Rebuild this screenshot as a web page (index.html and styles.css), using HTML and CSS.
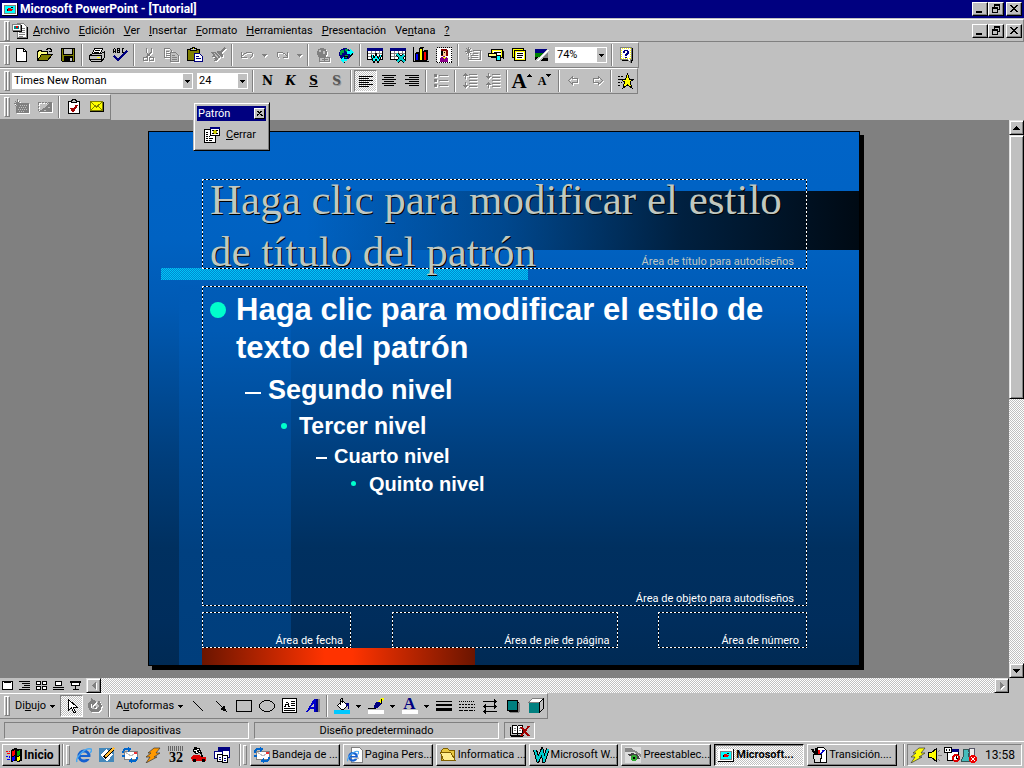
FILE: index.html
```html
<!DOCTYPE html>
<html lang="es">
<head>
    <meta charset="UTF-8">
    <meta name="viewport" content="width=device-width, initial-scale=1.0">
    <title>Microsoft PowerPoint - [Tutorial]</title>
    <link rel="stylesheet" href="styles.css">
</head>
<body>
    <!-- shared drawings -->
    <svg class="defs" aria-hidden="true">
        <symbol id="i-min" viewBox="0 0 12 10"><path fill="#000" d="M2 7h6v2H2z"/></symbol>
        <symbol id="i-restore" viewBox="0 0 12 10"><path fill="#000" d="M4 0h6v2H4zM4 2h1v1H4zM9 2h1v4H9zM8 5h1v1H8zM2 3h6v2H2zM2 5h1v4H2zM7 5h1v4H7zM2 8h6v1H2z"/></symbol>
        <symbol id="i-close" viewBox="0 0 12 10"><path fill="#000" d="M2 1h2v1H2zM8 1h2v1H8zM3 2h2v1H3zM7 2h2v1H7zM4 3h4v1H4zM5 4h2v1H5zM4 5h4v1H4zM3 6h2v1H3zM7 6h2v1H7zM2 7h2v1H2zM8 7h2v1H8z"/></symbol>
        <symbol id="i-down" viewBox="0 0 5 3"><path fill="#000" d="M0 0h5v1H0zM1 1h3v1H1zM2 2h1v1H2z"/></symbol>
        <symbol id="i-ppt" viewBox="0 0 16 16"><path fill="#000" d="M0 2h16v13H0z"/><path fill="#fff" d="M0 2h15v12H0z"/><path fill="#808080" d="M2 4h12v9H2z"/><path fill="#0ff" d="M3 5h10v7H3z"/><path fill="#e00" d="M6 7h3v1h2v1h-1v1H6z"/><path fill="#000" d="M9 6h2v1H9zM5 8h1v2H5z"/></symbol>
        <symbol id="i-mail" viewBox="0 0 16 16"><path fill="#fff" stroke="#808080" d="M2.500 4.500h13v8h-13z"/><path fill="none" stroke="#c0c0c0" d="M3 5l6 4 6-4"/><path fill="#e33" d="M12 5h3v2h-3z"/><path fill="none" stroke="#06c" stroke-width="2" d="M1 6c0-4 3-5 6-4M15 10c0 4-3 5-6 4"/><path fill="#06c" d="M6 0l4 2-4 3zM10 11l-4 3 4 2zM0 8h3v2H0z"/></symbol>
        <symbol id="i-ie" viewBox="0 0 16 16"><g shape-rendering="auto"><circle cx="8" cy="9" r="5" fill="none" stroke="#1560d0" stroke-width="3"/><path fill="#1560d0" d="M4 8h9v2H4z"/><path fill="#c0c0c0" d="M10 10h6v2h-6z"/><path fill="none" stroke="#4aa8f0" stroke-width="1.500" d="M1 15c-2-4 8-15 14-13 1 1 0 3-1 4"/></g></symbol>
        <symbol id="i-bolt" viewBox="0 0 16 16"><path stroke="#333" stroke-width=".7" shape-rendering="auto" d="M9 1h6l-4 5h4l-6 4h3L1 16l4-6H1l5-4H3z"/></symbol>
    </svg>

    <header class="title-bar">
        <svg class="icon"><use href="#i-ppt"/></svg>
        <h1>Microsoft PowerPoint - [Tutorial]</h1>
        <div class="window-buttons">
            <button aria-label="Minimizar"><svg><use href="#i-min"/></svg></button>
            <button aria-label="Restaurar"><svg><use href="#i-restore"/></svg></button>
            <button class="close" aria-label="Cerrar"><svg><use href="#i-close"/></svg></button>
        </div>
    </header>

    <nav class="menu-bar">
        <span class="grip"></span>
        <svg class="icon" viewBox="0 0 16 16"><path fill="#fff" stroke="#808080" d="M5.500 .5h6l3 3v11h-9z"/><path fill="none" stroke="#000" d="M5 15.500h10.500V4"/><path stroke="#808080" d="M10 5.500h3M10 7.500h3M7 9.500h6M7 11.500h6M7 13.500h4"/><path fill="#fff" stroke="#808080" d="M.5 1.500h8v6h-8z"/><path fill="#088" d="M2 3h5v3H2z"/><path fill="#e00" d="M4 3h2v2H4z"/><path fill="none" stroke="#000" d="M1 8.500h8.500V2"/></svg>
        <div class="menus">
            <button><u>A</u>rchivo</button>
            <button><u>E</u>dición</button>
            <button><u>V</u>er</button>
            <button><u>I</u>nsertar</button>
            <button><u>F</u>ormato</button>
            <button><u>H</u>erramientas</button>
            <button><u>P</u>resentación</button>
            <button>Ve<u>n</u>tana</button>
            <button><u>?</u></button>
        </div>
        <div class="window-buttons">
            <button aria-label="Minimizar ventana"><svg><use href="#i-min"/></svg></button>
            <button aria-label="Restaurar ventana"><svg><use href="#i-restore"/></svg></button>
            <button class="close" aria-label="Cerrar ventana"><svg><use href="#i-close"/></svg></button>
        </div>
    </nav>

    <div class="toolbars">
        <!-- standard -->
        <div class="toolbar">
            <span class="grip"></span>
            <button class="tool" aria-label="Nuevo"><svg viewBox="0 0 16 16"><path fill="#fff" stroke="#000" d="M2.500 1.500h7l3 3v10h-10z"/><path fill="none" stroke="#000" d="M9.500 1.500v3h3"/></svg></button>
            <button class="tool" aria-label="Abrir"><svg viewBox="0 0 16 16"><path fill="#ffff80" d="M1 4h4l1 1h5v3H5l-3 5H1z"/><path fill="none" stroke="#000" d="M.5 13.500v-9h1v-1h3v1h6v3"/><path fill="#808000" stroke="#000" d="M.5 13.500l4-6h11l-5 6z"/><path fill="none" stroke="#000" d="M9 2.500h1v-1h3v1h1v2M12 4.500h3M14.500 2v3"/></svg></button>
            <button class="tool" aria-label="Guardar"><svg viewBox="0 0 16 16"><path fill="#808000" stroke="#000" d="M1.500 1.500h13v13h-12l-1-1z"/><path fill="#c0c0c0" stroke="#000" d="M3.500 1.500h9v6h-9z"/><path fill="#000" d="M4 9h9v6H4z"/><path fill="#c0c0c0" d="M10 11h2v3h-2z"/></svg></button>
            <span class="sep"></span>
            <button class="tool" aria-label="Imprimir"><svg viewBox="0 0 16 16"><path fill="#fff" stroke="#000" d="M5.500 1.500h8l-2 5h-8z"/><path stroke="#000" d="M6 3.500h5M5 5.500h5"/><path fill="#c0c0c0" stroke="#000" d="M.5 8.500l3-2h9l3-2v6l-3 4h-10l-2-2z"/><path stroke="#000" d="M1 8.500h12M1 12.500h11M12.500 8v6"/><path stroke="#ff0" d="M8 10.500h3"/></svg></button>
            <button class="tool" aria-label="Ortografía"><svg viewBox="0 0 16 16"><path fill="none" stroke="#000" d="M1.500 6V2M2 1.500h1M3.500 2v4M2 4.500h1M5.500 1v4.500h2v-2h-2v-2h2v2M12 1.500h-2v4h2"/><path fill="none" stroke="#000080" stroke-width="2" d="M2 9l4 4 9-9"/></svg></button>
            <span class="sep"></span>
            <button class="tool off" aria-label="Cortar"><svg viewBox="0 0 16 16"><path fill="none" stroke="#808080" d="M5.500 1v4l2 4M10.500 1v4l-5 5M8 8l2 2"/><circle cx="4.500" cy="12" r="2" fill="none" stroke="#808080"/><circle cx="10.500" cy="12" r="2" fill="none" stroke="#808080"/></svg></button>
            <button class="tool off" aria-label="Copiar"><svg viewBox="0 0 16 16"><path fill="none" stroke="#808080" d="M.5 1.500h5l2 2v7h-7zM2 4.500h3M2 6.500h4M2 8.500h4"/><path fill="#c0c0c0" stroke="#808080" d="M6.500 5.500h5l3 3v6h-8zM8 8.500h3M8 10.500h5M8 12.500h5"/></svg></button>
            <button class="tool" aria-label="Pegar"><svg viewBox="0 0 16 16"><path fill="#808000" stroke="#000" d="M.5 2.500h12v11H.5z"/><path fill="#c0c0c0" stroke="#000" d="M3.500 3.500v-2h2v-1h2v1h2v2z"/><path fill="#ff0" d="M6 1h1v1H6z"/><path fill="#fff" stroke="#000080" d="M7.500 6.500h5l3 3v5h-8zM9 9.500h3M9 11.500h5"/></svg></button>
            <button class="tool off" aria-label="Copiar formato"><svg viewBox="0 0 16 16"><path fill="none" stroke="#808080" stroke-width="2" d="M15 1l-5 5"/><path fill="#808080" d="M7 4h2l4 4v2h-2L6 5zM0 5h5l5 5-4 4H3l2-2H3l2-2H2l1-2z"/><path stroke="#c0c0c0" d="M4 6l5 6"/></svg></button>
            <span class="sep"></span>
            <button class="tool off" aria-label="Deshacer"><svg viewBox="0 0 16 16"><path fill="none" stroke="#808080" d="M2.500 5v5h5M3 9l3-3h1l1-1h4l1 1v3l-2 2"/></svg></button>
            <button class="drop off" aria-label="Lista deshacer"><svg viewBox="0 0 5 3"><path fill="#808080" d="M0 0h5v1H0zM1 1h3v1H1zM2 2h1v1H2z"/></svg></button>
            <button class="tool off" aria-label="Rehacer"><svg viewBox="0 0 16 16"><path fill="none" stroke="#808080" d="M13.500 5v5h-5M13 9l-3-3H9L8 5H4L3 6v3l2 2"/></svg></button>
            <button class="drop off" aria-label="Lista rehacer"><svg viewBox="0 0 5 3"><path fill="#808080" d="M0 0h5v1H0zM1 1h3v1H1zM2 2h1v1H2z"/></svg></button>
            <span class="sep"></span>
            <button class="tool off" aria-label="Hipervínculo"><svg viewBox="0 0 16 16"><circle cx="7" cy="6" r="5" fill="#808080"/><path fill="#c0c0c0" d="M4 3h2v2H4zM8 4h2v3H8z"/><path fill="#c0c0c0" stroke="#808080" d="M4.500 10.500h5v4h-5zM9.500 10.500h5v4h-5zM7 12.500h6"/></svg></button>
            <button class="tool" aria-label="Barra Web"><svg viewBox="0 0 16 16"><circle cx="7" cy="7" r="6" fill="#000080"/><path fill="#00a040" d="M3 3h3v3H4v2H2V5zM7 2h3v3H8zM7 8h3v3H7z"/><path fill="#0ff" d="M9 4h3V2l4 4-4 3V7H9zM9 12H6v-2l-4 3 4 3v-2h3z"/><path fill="none" stroke="#000" d="M12 9.500l3-3M6 9.500h3v1M6 15.500h1"/></svg></button>
            <span class="sep"></span>
            <button class="tool" aria-label="Tabla de Word"><svg viewBox="0 0 16 16"><path fill="#fff" stroke="#000" d="M.5 1.500h15v11H.5z"/><path fill="#000080" d="M0 1h16v3H0z"/><path stroke="#808080" d="M1 6.500h14M1 9.500h14M4.500 4v8M8.500 4v8M12.500 4v8"/><path fill="none" stroke="#000" stroke-width="3" d="M5 8l2 6 2-5 2 5 3-6"/><path fill="none" stroke="#0ff" d="M5 8l2 6 2-5 2 5 3-6"/></svg></button>
            <button class="tool" aria-label="Hoja de Excel"><svg viewBox="0 0 16 16"><path fill="#fff" stroke="#000" d="M.5 1.500h15v11H.5z"/><path fill="#000080" d="M0 1h16v3H0z"/><path stroke="#808080" d="M1 6.500h14M1 9.500h14M4.500 4v8M8.500 4v8M12.500 4v8"/><path stroke="#000" stroke-width="3" d="M7 7l8 8M14 8l-7 7"/><path stroke="#0cc" stroke-width="2" d="M7 7l8 8M14 8l-7 7"/></svg></button>
            <button class="tool" aria-label="Gráfico"><svg viewBox="0 0 16 16"><path fill="none" stroke="#000" d="M.5 0v14.500h15"/><path fill="#00f" stroke="#000" d="M2.500 6.500h3v7h-3z"/><path fill="#ff0" stroke="#000" d="M6.500 1.500h3v12h-3z"/><path fill="#f00" stroke="#000" d="M10.500 4.500h3v9h-3z"/><path fill="#000" d="M3 5h4v1H3zM7 0h4v1H7zM11 3h4v1h-4zM14 4h1v9h-1z"/></svg></button>
            <button class="tool" aria-label="Imágenes"><svg viewBox="0 0 16 16"><path fill="#fff" stroke="#000" stroke-dasharray="1 1" d="M.5 .5h15v15H.5z"/><path fill="#800000" d="M5 2h5l2 2v5H5z"/><path fill="#fc9" d="M7 4h3v5H7z"/><path fill="#000" d="M5 4h2v4H5zM8 5h1v1H8z"/><path fill="#808" d="M4 11l4-2 4 2v4H4z"/><path fill="#ff0" d="M7 10h3l-1 3z"/></svg></button>
            <span class="sep"></span>
            <button class="tool off" aria-label="Nueva diapositiva"><svg viewBox="0 0 16 16"><path fill="none" stroke="#808080" d="M3.500 0v9M0 4.500h7M1 1l5 6M6 1L1 7M8 3.500h7.500v9h-12v-3M8 6.500h5M6 8.500h7M6 10.500h7"/></svg></button>
            <button class="tool" aria-label="Diseño"><svg viewBox="0 0 16 16"><path fill="#fff" stroke="#000" d="M3.500 2.500h11v8h-11z"/><path fill="none" stroke="#ff0" d="M4.500 3.500h9v6h-9z"/><path stroke="#000" d="M6 5.500h7"/><path fill="#ffff80" stroke="#000" d="M.5 6.500h8v3h-8z"/><path fill="#0ff" stroke="#000" d="M8.500 8.500h4v5h-4z"/><path fill="#000" d="M15 4h1v8h-1z"/></svg></button>
            <button class="tool" aria-label="Aplicar diseño"><svg viewBox="0 0 16 16"><path fill="#ff0" stroke="#000" d="M1.500 1.500h11v9h-11z"/><path fill="#ff0" stroke="#000" d="M3.500 3.500h11v10h-11z"/><path fill="#fff" d="M5 5h8v7H5z"/><path stroke="#000" d="M6 6.500h6M6 8.500h6M6 10.500h5"/></svg></button>
            <button class="tool" aria-label="Blanco y negro"><svg viewBox="0 0 16 16"><path fill="#000080" d="M1 2h12l-4 4H1z"/><path fill="#008000" d="M1 6h8l-4 4H1z"/><path fill="#000" d="M1 10h3l-3 3zM9 11h5v3H6z"/><path fill="#fff" d="M13 3h2L5 14H3z"/><path fill="#808080" d="M14 5v6H9z"/></svg></button>
            <label class="combo zoom" aria-label="Zoom"><select><option>74%</option></select><span><svg><use href="#i-down"/></svg></span></label>
            <span class="sep"></span>
            <button class="tool" aria-label="Ayuda"><svg viewBox="0 0 16 16"><path fill="#000" d="M3 1h11v13h-1v2h-2v-2H3z"/><path fill="#fff" stroke="#808080" d="M1.500 .5h11v12h-1v3l-3-3h-7z"/><path fill="none" stroke="#ff0" stroke-dasharray="1 1" d="M2.500 1.500h9v10h-9z"/><path fill="#000080" d="M5 3h4v1h1v3H9v1H8v1H6V7h1V6h1V4H6v2H4V4h1zM6 10h2v1H6z"/></svg></button>
        </div>

        <!-- formatting -->
        <div class="toolbar">
            <span class="grip"></span>
            <label class="combo font" aria-label="Fuente"><select><option>Times New Roman</option></select><span><svg><use href="#i-down"/></svg></span></label>
            <label class="combo size" aria-label="Tamaño"><select><option>24</option></select><span><svg><use href="#i-down"/></svg></span></label>
            <span class="sep"></span>
            <button class="tool letter">N</button>
            <button class="tool letter italic">K</button>
            <button class="tool letter"><u>S</u></button>
            <button class="tool letter shaded">S</button>
            <span class="sep"></span>
            <button class="tool pressed" aria-label="Izquierda"><svg viewBox="0 0 16 16"><path stroke="#000" d="M1 3.500h14M1 5.500h10M1 7.500h14M1 9.500h10M1 11.500h14M1 13.500h10"/></svg></button>
            <button class="tool" aria-label="Centrar"><svg viewBox="0 0 16 16"><path stroke="#000" d="M1 2.500h14M3 4.500h10M1 6.500h14M3 8.500h10M1 10.500h14M3 12.500h10"/></svg></button>
            <button class="tool" aria-label="Derecha"><svg viewBox="0 0 16 16"><path stroke="#000" d="M1 2.500h14M5 4.500h10M1 6.500h14M5 8.500h10M1 10.500h14M5 12.500h10"/></svg></button>
            <span class="sep"></span>
            <button class="tool off" aria-label="Viñetas"><svg viewBox="0 0 16 16"><path fill="#808080" d="M1 1h3v3H1zM1 6h3v3H1zM1 11h3v3H1zM6 2h9v1H6zM6 7h9v1H6zM6 12h9v1H6z"/></svg></button>
            <span class="sep"></span>
            <button class="tool off" aria-label="Aumentar espacio"><svg viewBox="0 0 16 16"><path fill="#808080" d="M3 0h1v1h1v1h1v1H4v3H3V3H1V2h1V1h1zM3 9h1v3h2v1H5v1H4v1H3v-1H2v-1H1v-1h2zM7 1h8v1H7zM7 4h8v1H7zM7 7h8v1H7zM7 10h8v1H7zM7 13h8v1H7z"/></svg></button>
            <button class="tool off" aria-label="Disminuir espacio"><svg viewBox="0 0 16 16"><path fill="#808080" d="M3 0h1v3h2v1H5v1H4v1H3V5H2V4H1V3h2zM3 9h1v1h1v1h1v1H4v3H3v-3H1v-1h1v-1h1zM7 1h8v1H7zM7 4h8v1H7zM7 7h8v1H7zM7 10h8v1H7zM7 13h8v1H7z"/></svg></button>
            <span class="sep"></span>
            <button class="tool letter grow">A<svg viewBox="0 0 5 3"><path fill="#000" d="M2 0h1v1H2zM1 1h3v1H1zM0 2h5v1H0z"/></svg></button>
            <button class="tool letter shrink">A<svg viewBox="0 0 5 3"><use href="#i-down"/></svg></button>
            <span class="sep"></span>
            <button class="tool off" aria-label="Promover"><svg viewBox="0 0 16 16"><path fill="none" stroke="#808080" d="M2.500 7.500l4-4v2h5v4h-5v2z"/></svg></button>
            <button class="tool off" aria-label="Degradar"><svg viewBox="0 0 16 16"><path fill="none" stroke="#808080" d="M13.500 7.500l-4-4v2h-5v4h5v2z"/></svg></button>
            <span class="sep"></span>
            <button class="tool" aria-label="Efectos de animación"><svg viewBox="0 0 16 16"><path stroke="#000" d="M0 3.500h5M0 6.500h3M0 9.500h4M0 12.500h3" stroke-dasharray="2 1"/><path fill="#ff0" stroke="#000" d="M9.500 1l2 5h4.500l-4 3 2 6-4.500-3-4.500 3 1.500-6-4-3h5z"/></svg></button>
        </div>

        <!-- reviewing -->
        <div class="toolbar reviewing">
            <span class="grip"></span>
            <button class="tool off" aria-label="Insertar comentario"><svg viewBox="0 0 16 16"><path fill="#808080" d="M3 4h12v10H2V7h1z"/><path fill="none" stroke="#808080" d="M3.500 0v8M0 4.500h7M1 2l5 5M6 2L1 7"/><path fill="none" stroke="#c0c0c0" stroke-dasharray="1 1" d="M6 6.500h7M5 8.500h8M4 10.500h9M5 12.500h6"/></svg></button>
            <button class="tool off" aria-label="Mostrar comentarios"><svg viewBox="0 0 16 16"><path fill="none" stroke="#808080" stroke-dasharray="2 1" d="M1.500 3.500h13v9h-13z"/><path fill="#808080" d="M3 11l9-8h3v8l-1 2H3z"/><path stroke="#c0c0c0" d="M4 11l8-7M7 11.500h2M11 8.500h2"/></svg></button>
            <span class="sep"></span>
            <button class="tool" aria-label="Crear tarea"><svg viewBox="0 0 16 16"><path fill="#fff" stroke="#000" d="M2.500 2.500h11v12h-11z"/><path fill="#c0c0c0" stroke="#000" d="M5.500 3.500v-2h1v-1h3v1h1v2z"/><path fill="none" stroke="#a00000" stroke-width="2" d="M5 9l2 3 4-6"/></svg></button>
            <button class="tool" aria-label="Enviar"><svg viewBox="0 0 16 16"><path fill="#ff0" stroke="#808000" d="M1.500 2.500h12v9h-12z"/><path fill="none" stroke="#808000" d="M2 3l5.500 5L13 3M2 11l4-4M13 11L9 7"/><path fill="none" stroke="#000" d="M1 12.500h13.500V3"/></svg></button>
        </div>
    </div>

    <div class="palette">
        <div class="palette-title"><h2>Patrón</h2><button aria-label="Cerrar barra"><svg><use href="#i-close"/></svg></button></div>
        <button class="palette-close"><svg class="icon" viewBox="0 0 16 16"><path fill="#fff" stroke="#000" d="M.5 2.500h11v13H.5z"/><path stroke="#000" d="M2 5.500h2M2 7.500h2M2 9.500h2M5 9.500h1M2 11.500h2M5 11.500h4M2 13.500h2M5 13.500h3"/><path fill="#fff" stroke="#000" d="M6.500 1.500h9v7h-9z"/><path fill="#000080" d="M6 0h10v2H6z"/><path stroke="#000" d="M8 3.500h2M12 3.500h2M8 6.500h2M12 6.500h2"/><path fill="#cc0" d="M10 3h2v1h1v2h-1v1h-2V6H9V4h1z"/></svg><span><u>C</u>errar</span></button>
    </div>

    <main class="work-area">
        <div class="desk">
            <article class="slide">
                <section class="frame slide-title">
                    <h2>Haga clic para modificar el estilo<br>de título del patrón</h2>
                    <span class="area">Área de título para autodiseños</span>
                </section>
                <section class="frame slide-body">
                    <ul>
                        <li class="l1">Haga clic para modificar el estilo de texto del patrón</li>
                        <li class="l2">Segundo nivel</li>
                        <li class="l3">Tercer nivel</li>
                        <li class="l4">Cuarto nivel</li>
                        <li class="l5">Quinto nivel</li>
                    </ul>
                    <span class="area">Área de objeto para autodiseños</span>
                </section>
                <footer class="slide-foot">
                    <div class="frame">Área de fecha</div>
                    <div class="frame wide">Área de pie de página</div>
                    <div class="frame">Área de número</div>
                </footer>
            </article>
        </div>
        <div class="vscroll">
            <button aria-label="Subir"><svg viewBox="0 0 7 4"><path fill="#000" d="M3 0h1v1H3zM2 1h3v1H2zM1 2h5v1H1zM0 3h7v1H0z"/></svg></button>
            <div class="track"><div class="thumb"></div></div>
            <button aria-label="Bajar"><svg viewBox="0 0 7 4"><path fill="#000" d="M0 0h7v1H0zM1 1h5v1H1zM2 2h3v1H2zM3 3h1v1H3z"/></svg></button>
        </div>
    </main>

    <div class="hscroll">
        <div class="views">
            <button aria-label="Diapositiva"><svg viewBox="0 0 12 12"><path fill="#fff" stroke="#000" d="M.5 1.500h10v8H.5z"/><path fill="#000" d="M2 1h7v2H2z"/></svg></button>
            <button aria-label="Esquema"><svg viewBox="0 0 12 12"><path stroke="#000" d="M0 1.500h11M3 3.500h8M5 5.500h6M3 7.500h8M0 9.500h11"/></svg></button>
            <button aria-label="Clasificador"><svg viewBox="0 0 12 12"><path fill="#fff" stroke="#000" d="M.5 1.500h4v3h-4zM6.500 1.500h4v3h-4zM.5 6.500h4v3h-4zM6.500 6.500h4v3h-4z"/></svg></button>
            <button aria-label="Notas"><svg viewBox="0 0 12 12"><path fill="#fff" stroke="#000" d="M2.500 1.500h6v4h-6z"/><path stroke="#000" d="M0 7.500h11M0 9.500h11"/></svg></button>
            <button aria-label="Presentación"><svg viewBox="0 0 12 12"><path fill="#fff" stroke="#000" d="M1.500 2.500h8v3h-8z"/><path stroke="#000" stroke-width="2" d="M0 2h11"/><path fill="none" stroke="#000" d="M5.500 6v4M3 9.500h6"/></svg></button>
        </div>
        <button class="arrow" aria-label="Izquierda"><svg viewBox="0 0 4 7"><path fill="#808080" d="M3 0h1v7H3zM2 1h1v5H2zM1 2h1v3H1zM0 3h1v1H0z"/></svg></button>
        <div class="track"></div>
        <button class="arrow" aria-label="Derecha"><svg viewBox="0 0 4 7"><path fill="#808080" d="M0 0h1v7H0zM1 1h1v5H1zM2 2h1v3H2zM3 3h1v1H3z"/></svg></button>
        <span class="corner"></span>
    </div>

    <!-- drawing -->
    <div class="draw-row">
        <div class="toolbar">
            <span class="grip"></span>
            <button class="text-tool dibujo"><span>Di<u>b</u>ujo</span><svg><use href="#i-down"/></svg></button>
            <button class="tool pressed" aria-label="Seleccionar"><svg viewBox="0 0 16 16"><path fill="#fff" stroke="#000" d="M4.500 1.500v11l3-3 2 5h2l-2-5h4z"/></svg></button>
            <button class="tool off" aria-label="Girar"><svg viewBox="0 0 16 16"><path fill="none" stroke="#808080" stroke-width="3" d="M11 4c4 3 2 9-3 9S0 7 5 4"/><path fill="#808080" d="M4 0l6 4-5 4z"/><circle cx="8" cy="9" r="1" fill="#808080"/></svg></button>
            <span class="sep"></span>
            <button class="text-tool autoformas"><span>A<u>u</u>toformas</span><svg><use href="#i-down"/></svg></button>
            <button class="tool" aria-label="Línea"><svg viewBox="0 0 16 16"><path stroke="#000" d="M3 3l10 10"/></svg></button>
            <button class="tool" aria-label="Flecha"><svg viewBox="0 0 16 16"><path stroke="#000" d="M3 3l8 8"/><path fill="#000" d="M14 14l-7-3 4-4z"/></svg></button>
            <button class="tool" aria-label="Rectángulo"><svg viewBox="0 0 16 16"><path fill="none" stroke="#000" d="M.5 2.500h15v11H.5z"/></svg></button>
            <button class="tool" aria-label="Elipse"><svg viewBox="0 0 16 16"><ellipse cx="8" cy="8" rx="7.500" ry="5.500" fill="none" stroke="#000"/></svg></button>
            <button class="tool" aria-label="Cuadro de texto"><svg viewBox="0 0 16 16"><path fill="#fff" stroke="#000" d="M.5 .5h14v14H.5z"/><path fill="none" stroke="#000" d="M2 8.500h2M6 8.500h2M3.500 8V6M4 4.500h2M6.500 5v3M4 6.500h3M9 3.500h4M9 5.500h4M9 7.500h4M2 10.500h11M2 12.500h11"/></svg></button>
            <button class="tool" aria-label="WordArt"><svg viewBox="0 0 16 16"><path fill="#808080" d="M13 1h2v13h-2z"/><path fill="#00c" d="M9 1h4v13H9v-3H5l-2 3H0l3-3z"/><path fill="#000080" d="M11 1h2v13h-2z"/><path fill="#c0c0c0" d="M9 5v4H6z"/></svg></button>
            <span class="sep"></span>
            <button class="tool" aria-label="Relleno"><svg viewBox="0 0 16 16"><path fill="#00c8ff" d="M0 12h16v4H0z"/><path fill="#fff" stroke="#000" d="M3.500 7.500l5-5 5 5-4 4h-2z"/><path fill="none" stroke="#000" d="M6.500 7V2l1-2h1v5"/><path fill="#000080" d="M12 5h3v6h-1V8h-2z"/></svg></button>
            <button class="drop" aria-label="Color de relleno"><svg><use href="#i-down"/></svg></button>
            <button class="tool" aria-label="Línea de color"><svg viewBox="0 0 16 16"><path fill="#fff" d="M0 12h16v4H0z"/><path stroke="#ff0" stroke-width="3" d="M15 0l-4 5"/><path fill="#000080" d="M8 4h4l1 2-3 4H6V8z"/><path fill="#000" d="M13 1h1v5h-1zM0 10h8v1H0z"/></svg></button>
            <button class="drop" aria-label="Color de línea"><svg><use href="#i-down"/></svg></button>
            <button class="tool font-color" aria-label="Color de fuente">A</button>
            <button class="drop" aria-label="Lista de colores"><svg><use href="#i-down"/></svg></button>
            <button class="tool" aria-label="Estilo de línea"><svg viewBox="0 0 16 16"><path fill="#000" d="M0 3h16v1H0zM0 6h16v2H0zM0 10h16v3H0z"/></svg></button>
            <button class="tool" aria-label="Estilo de guión"><svg viewBox="0 0 16 16"><path stroke="#000" stroke-dasharray="1 1" d="M0 3.500h16"/><path stroke="#000" stroke-dasharray="2 1" d="M0 6.500h16M0 9.500h16"/><path stroke="#000" stroke-dasharray="4 1" d="M0 12.500h16"/></svg></button>
            <button class="tool" aria-label="Estilo de flecha"><svg viewBox="0 0 16 16"><path fill="none" stroke="#000" d="M1 3.500h14M12.500 1v5M13.500 2v3M1 8.500h14M3.500 6v5M2.500 7v3M12.500 6v5M13.500 7v3M1 13.500h14M3.500 11v5M2.500 12v3"/></svg></button>
            <button class="tool" aria-label="Sombra"><svg viewBox="0 0 16 16"><path fill="#000" d="M4 4h10v10H4z"/><path fill="#808080" d="M13 5h2v9h-1v1H5v-1h8z"/><path fill="#008080" stroke="#000" d="M2.500 2.500h10v10h-10z"/></svg></button>
            <button class="tool" aria-label="3D"><svg viewBox="0 0 16 16"><path fill="#fff" stroke="#808080" d="M.5 4.500l4-4h11l-4 4z"/><path fill="#c0c0c0" stroke="#000" d="M11.500 4.500l4-4v10l-4 4z"/><path fill="#008080" d="M1 5h10v10H1z"/></svg></button>
        </div>
    </div>

    <div class="status">
        <div class="cell">Patrón de diapositivas</div>
        <div class="cell">Diseño predeterminado</div>
        <div class="cell spell"><svg viewBox="0 0 22 12"><path fill="#fff" stroke="#000" d="M3.500 .5h4l1 1 1-1h4v8h-4l-1 1-1-1h-4z"/><path fill="none" stroke="#000" d="M1.500 2v8.500h13M8.500 1v8M2 11.500h12"/><path stroke="#808080" d="M5 3.500h2M5 5.500h2M10 3.500h2M10 5.500h2"/><path stroke="#a00000" stroke-width="2" d="M12 2l8 9M20 1l-8 10"/></svg></div>
    </div>

    <footer class="taskbar">
        <button class="start"><svg class="icon" viewBox="0 0 16 16"><path fill="#000" d="M5 3l4-2 3 1h4v12l-4 1-3-1-4 1z"/><path fill="#f00" d="M6 4l3-1v5l-3 1z"/><path fill="#0a0" d="M11 4l3-1v5l-3 1z"/><path fill="#00f" d="M6 10l3-1v4l-3 1z"/><path fill="#ff0" d="M11 10l3-1v4l-3 1z"/><path fill="#f00" d="M0 4h2v1H0zM3 4h1v1H3zM1 6h3v1H1z"/><path fill="#00f" d="M0 9h2v1H0zM3 9h1v2H3zM1 12h3v1H1z"/></svg>Inicio</button>
        <span class="sep"></span><span class="grip"></span>
        <div class="quick">
            <button aria-label="Internet Explorer"><svg class="icon"><use href="#i-ie"/></svg></button>
            <button aria-label="Escritorio"><svg class="icon" viewBox="0 0 16 16"><path fill="#48b" d="M0 1h15v14H0z"/><path fill="#fff" d="M1 8l6-6 7 5-6 8z"/><path stroke="#000" stroke-width="3" d="M5 11l9-9"/><path stroke="#fb3" stroke-width="2" d="M6 10l9-9"/></svg></button>
            <button aria-label="Outlook Express"><svg class="icon"><use href="#i-mail"/></svg></button>
            <button aria-label="Winamp"><svg class="icon orange"><use href="#i-bolt"/></svg></button>
            <button class="cal" aria-label="Calendario">32</button>
            <button aria-label="Carreras"><svg class="icon" viewBox="0 0 16 16"><path fill="#fff" stroke="#000" d="M3.500 .5l5 1 1 4-5 1-2-2z"/><path fill="#000" d="M4 1h2v2H4zM6 3h2v2H6zM3 4h2v2H3zM8 2h1l4 9h-2z"/><path fill="#d00" d="M0 10l3-2h5l3 2h4v4H1z"/><path fill="#000" d="M2 12h3v3H2zM11 12h3v3h-3z"/></svg></button>
            <button aria-label="Ventanas"><svg class="icon" viewBox="0 0 16 16"><path fill="#fff" stroke="#000080" d="M4.500 1.500h11v9h-11z"/><path fill="#000080" d="M4 0h12v4H4z"/><path fill="#fff" stroke="#000080" d="M.5 4.500h8v7h-8z"/><path fill="#fff" stroke="#000" d="M3.500 7.500h5v7h-5zM8.500 8.500h5v7h-5z"/><path stroke="#000080" d="M5 10.500h2M5 12.500h2M10 11.500h2M10 13.500h2"/></svg></button>
        </div>
        <span class="sep"></span><span class="grip"></span>
        <div class="tasks">
            <button><svg class="icon"><use href="#i-mail"/></svg><span>Bandeja de ...</span></button>
            <button><svg class="icon" viewBox="0 0 16 16"><path fill="#fff" stroke="#808080" d="M4.500 .5h8l3 3v12h-11z"/><svg y="3" width="12" height="12"><use href="#i-ie"/></svg></svg><span>Pagina Pers...</span></button>
            <button><svg class="icon" viewBox="0 0 16 16"><path fill="#e8c840" stroke="#806000" d="M1.500 3.500l2-2h4l2 2h5v10h-13z"/><path fill="#ffee90" stroke="#806000" d="M.5 5.500h10l5 8h-12z"/></svg><span>Informatica ...</span></button>
            <button><svg class="icon" viewBox="0 0 16 16"><path fill="none" stroke="#000" stroke-width="4" d="M2 3l3 10 4-9 2 9 4-11"/><path fill="none" stroke="#0cc" stroke-width="2" d="M2 3l3 10 4-9 2 9 4-11"/></svg><span>Microsoft W...</span></button>
            <button><svg class="icon" viewBox="0 0 16 16"><path fill="#ddd" d="M0 0h16v16H0z"/><path fill="#888" d="M0 1h6l10 6v3L9 5H0z"/><path fill="#444" d="M2 8l5-2 6 2 2 4h-2l-4-3H5z"/><circle cx="9" cy="11" r="3" fill="#3a3"/><path fill="#000" d="M8 10h2v2H8z"/></svg><span>Preestablec...</span></button>
            <button class="active"><svg class="icon"><use href="#i-ppt"/></svg><span>Microsoft...</span></button>
            <button><svg class="icon" viewBox="0 0 16 16"><path fill="#fff" stroke="#000" d="M6.500 .5h6l3 3v12h-9z"/><path stroke="#e00" stroke-width="2" d="M8 8V3"/><path stroke="#00c" stroke-width="2" d="M9 8l4-5"/><path stroke="#000" stroke-width="2" d="M5 8L1 2M5 8V1"/><path fill="#ddd" stroke="#000" d="M2.500 7.500h8l-1 8h-6z"/></svg><span>Transición....</span></button>
        </div>
        <span class="sep"></span>
        <div class="tray">
            <svg class="icon yellow"><use href="#i-bolt"/></svg>
            <svg class="icon" viewBox="0 0 16 16"><path fill="#ff0" stroke="#000" d="M1.500 5.500h3l5-4v13l-5-4h-3z"/><path stroke="#808080" d="M11 5l2-2M11 8.500h4M11 12l2 2"/></svg>
            <svg class="icon" viewBox="0 0 16 16"><path fill="#fff" stroke="#000" d="M3.500 3.500h11v10h-11z"/><path fill="#000080" d="M3 2h12v3H3z"/><path fill="#fff" stroke="#000" d="M.5 .5h7v5h-7z"/><path stroke="#000" d="M2.500 2v2M5.500 2v2"/><circle cx="12" cy="11" r="3" fill="#fff" stroke="#d00" stroke-width="2"/><path fill="none" stroke="#000" d="M12 9v2.500h2"/></svg>
            <svg class="icon" viewBox="0 0 16 16"><path fill="#eee" stroke="#556" d="M8 4a3 3 0 116 0 3 3 0 01-1 3l2 5H7l2-5z"/><path fill="#4bb" stroke="#355" d="M2 5a3 3 0 116 0 3 3 0 01-1 3l3 6H0l3-6z"/><circle cx="12" cy="12" r="4" fill="#e00"/><path stroke="#fff" d="M10 10l4 4M14 10l-4 4"/></svg>
            <time>13:58</time>
        </div>
    </footer>
</body>
</html>
```
FILE: styles.css
```css
*{
    box-sizing: border-box;
}
body{
    margin: 0;
    height: 100vh;
    display: flex;
    flex-direction: column;
    overflow: hidden;
    background: #c0c0c0;
    color: #000;
    font-family: Roboto, "Liberation Sans", sans-serif;
    font-size: 11px;
    line-height: 14px;
}
h1, h2, ul{
    margin: 0;
    padding: 0;
    font-size: inherit;
    font-weight: inherit;
}
button, select{
    margin: 0;
    padding: 0;
    border: 0;
    background: none;
    color: inherit;
    font: inherit;
    border-radius: 0;
}
svg{
    display: block;
    flex: none;
    shape-rendering: crispEdges;
}
.defs{
    position: absolute;
    width: 0;
    height: 0;
}
.icon{
    width: 16px;
    height: 16px;
}

/* title and menu */
.title-bar{
    display: flex;
    align-items: center;
    height: 18px;
    padding: 0 2px;
    gap: 2px;
    background: #000080;
    color: #fff;
}
.title-bar h1{
    flex: 1;
    font-size: 12px;
    font-weight: 700;
}
.window-buttons{
    display: flex;
}
.window-buttons button{
    width: 16px;
    height: 14px;
    padding: 1px;
    background: #c0c0c0;
    border: 1px solid;
    border-color: #fff #000 #000 #fff;
    box-shadow: inset -1px -1px #808080;
}
.window-buttons svg{
    width: 12px;
    height: 10px;
}
.window-buttons .close{
    margin-left: 2px;
}
.menu-bar{
    display: flex;
    align-items: center;
    height: 23px;
    margin-top: 1px;
    padding: 0 1px 0 4px;
    border-top: 1px solid #fff;
    border-bottom: 1px solid #808080;
    border-right: 1px solid #808080;
}
.menu-bar .icon{
    margin: 0 5px 0 2px;
}
.menus{
    display: flex;
    flex: 1;
    gap: 9px;
}
.grip{
    flex: none;
    width: 6px;
    height: 20px;
    border: 1px solid;
    border-color: #fff #808080 #808080 #fff;
    background: linear-gradient(90deg, #c0c0c0 1px, #808080 1px 2px, #fff 2px 3px, #c0c0c0 3px);
}

/* toolbars */
.toolbars{
    display: flex;
    flex-direction: column;
    align-items: flex-start;
}
.toolbar{
    display: flex;
    align-items: center;
    height: 26px;
    padding: 0 0 0 4px;
    border: 1px solid;
    border-color: #fff #808080 #808080 transparent;
    border-left: 0;
}
.reviewing{
    padding-right: 2px;
}
.tool{
    display: flex;
    align-items: center;
    justify-content: center;
    width: 23px;
    height: 22px;
}
.tool svg{
    width: 16px;
    height: 16px;
}
.drop{
    display: flex;
    align-items: center;
    justify-content: center;
    width: 12px;
    height: 22px;
}
.drop svg, .combo svg, .text-tool svg{
    width: 5px;
    height: 3px;
}
.off svg{
    filter: drop-shadow(1px 1px 0 #fff);
}
.pressed{
    border: 1px solid;
    border-color: #808080 #fff #fff #808080;
}
.pressed, .track, .tasks .active{
    background: repeating-conic-gradient(#fff 0 25%, #c0c0c0 0 50%) 0 0 / 2px 2px;
}
.sep{
    flex: none;
    width: 2px;
    height: 22px;
    margin: 0 2px;
    border-left: 1px solid #808080;
    border-right: 1px solid #fff;
}
.combo{
    position: relative;
    height: 16px;
    margin: 0 2px;
    background: #fff;
}
.combo select{
    display: block;
    appearance: none;
    width: 100%;
    height: 16px;
    padding-left: 2px;
    outline: 0;
}
.combo span{
    position: absolute;
    top: 1px;
    right: 1px;
    display: flex;
    align-items: center;
    justify-content: center;
    width: 9px;
    height: 14px;
    background: #c0c0c0;
    pointer-events: none;
}
.combo.font{
    width: 181px;
}
.combo.size{
    width: 51px;
}
.combo.zoom{
    width: 52px;
}
.letter{
    font-family: "DejaVu Serif", serif;
    font-size: 12px;
    font-weight: 700;
}
.italic{
    font-style: italic;
}
.shaded{
    color: #555;
    text-shadow: 1px 1px #999;
}
.grow, .shrink{
    font-family: "Liberation Serif", serif;
}
.grow{
    font-size: 21px;
}
.shrink{
    font-size: 12px;
}
.grow svg, .shrink svg{
    width: 5px;
    height: 3px;
    margin-bottom: 12px;
}
.text-tool{
    display: flex;
    align-items: center;
    gap: 4px;
    height: 22px;
}
.dibujo{
    width: 50px;
    padding-left: 5px;
}
.autoformas{
    width: 74px;
    padding-left: 4px;
}

/* floating bar */
.palette{
    position: absolute;
    z-index: 2;
    top: 102px;
    left: 193px;
    width: 77px;
    height: 49px;
    padding: 2px;
    background: #c0c0c0;
    border: 1px solid;
    border-color: #c0c0c0 #000 #000 #c0c0c0;
    box-shadow: inset 1px 1px #fff, inset -1px -1px #808080;
}
.palette-title{
    display: flex;
    align-items: center;
    justify-content: space-between;
    margin: 1px;
    height: 15px;
    padding: 0 1px;
    background: #000080;
    color: #fff;
}
.palette-title button{
    width: 11px;
    height: 11px;
    background: #c0c0c0;
    border: 1px solid;
    border-color: #fff #000 #000 #fff;
}
.palette-title svg{
    width: 9px;
    height: 9px;
}
.palette-close{
    display: flex;
    align-items: center;
    gap: 6px;
    padding: 5px 8px;
}

/* slide */
.work-area{
    display: flex;
    flex: 1;
    min-height: 0;
}
.desk{
    display: flex;
    flex: 1;
    align-items: center;
    justify-content: center;
    padding: 0 1px 1px 0;
    background: #808080;
}
.slide{
    position: relative;
    display: flex;
    flex-direction: column;
    width: 712px;
    aspect-ratio: 712 / 535;
    padding: 47px 52px 17px 53px;
    border: 1px solid #000;
    box-shadow: 4px 4px #000;
    background:
        linear-gradient(90deg, #6b1500, #ff3300 45%, #ff3300 55%, #6b1500) 53px 100% / 273px 17px no-repeat,
        linear-gradient(90deg, rgba(0, 10, 20, 0), rgba(0, 10, 20, 0) 22%, rgba(0, 10, 20, .3) 50%, rgba(0, 10, 20, .75) 75%, #000a14) 0 59px / 100% 59px no-repeat,
        linear-gradient(#005cb8, #005ab4 12%, #004e9c 35%, #004080 70%, #003e7c) 30px 100% / 112px 380px no-repeat,
        linear-gradient(#0064c8, #0062c2 20%, #005ab4 33%, #004e9c 45%, #003e7c 61%, #003060 78%, #002d5c 92%, #002a54);
}
/* cyan strip under the title */
.slide::before{
    content: "";
    position: absolute;
    top: 136px;
    left: 12px;
    width: 367px;
    height: 12px;
    background: repeating-conic-gradient(#00c4f8 0 25%, #0088d0 0 50%) 0 0 / 2px 2px;
}
.frame{
    position: relative;
    background:
        repeating-linear-gradient(90deg, #fff 0 2px, #000 2px 4px) 0 0 / 100% 1px no-repeat,
        repeating-linear-gradient(90deg, #fff 0 2px, #000 2px 4px) 0 100% / 100% 1px no-repeat,
        repeating-linear-gradient(#fff 0 2px, #000 2px 4px) 0 0 / 1px 100% no-repeat,
        repeating-linear-gradient(#fff 0 2px, #000 2px 4px) 100% 0 / 1px 100% no-repeat;
}
.slide-title{
    display: flex;
    align-items: center;
    height: 90px;
    padding: 4px 8px 0;
    color: #c0c8c0;
}
.slide-title h2{
    font-family: "Liberation Serif", serif;
    font-size: 43px;
    line-height: 52px;
    white-space: nowrap;
    text-shadow: 1px 1px #000;
}
.area{
    position: absolute;
    right: 13px;
    bottom: 0;
}
.slide-body{
    flex: 1;
    margin: 17px 0 6px;
    padding: 5px 8px;
    color: #fff;
}
.slide-body ul{
    list-style: none;
    font-family: "Liberation Sans", sans-serif;
    font-weight: 700;
}
.slide-body li{
    display: flex;
}
.slide-body li::before{
    content: "";
    flex: none;
    border-radius: 50%;
    background: #00ffcc;
}
.l1{
    font-size: 31px;
    line-height: 38px;
}
.l1::before{
    width: 16px;
    height: 16px;
    margin: 11px 10px 0 0;
}
.l2{
    margin: 6px 0 0 35px;
    font-size: 27px;
    line-height: 34px;
}
.l3{
    margin: 4px 0 0 71px;
    font-size: 23px;
    line-height: 30px;
}
.l3::before{
    width: 6px;
    height: 6px;
    margin: 12px 12px 0 0;
}
.l4{
    margin: 2px 0 0 106px;
    font-size: 20px;
    line-height: 26px;
}
.l5{
    margin: 2px 0 0 141px;
    font-size: 20px;
    line-height: 26px;
}
.l5::before{
    width: 5px;
    height: 5px;
    margin: 10px 13px 0 0;
}
.slide-body .l2::before, .slide-body .l4::before{
    border-radius: 0;
    background: #fff;
}
.slide-body .l2::before{
    width: 16px;
    height: 2px;
    margin: 19px 7px 0 0;
}
.slide-body .l4::before{
    width: 11px;
    height: 2px;
    margin: 14px 7px 0 0;
}
.slide-foot{
    display: flex;
    justify-content: space-between;
    color: #fff;
}
.slide-foot .frame{
    display: flex;
    align-items: flex-end;
    justify-content: flex-end;
    width: 149px;
    height: 36px;
    padding-right: 8px;
}
.slide-foot .wide{
    width: 226px;
}

/* scroll bars */
.vscroll{
    display: flex;
    flex-direction: column;
    width: 15px;
}
.vscroll button, .thumb, .arrow{
    display: flex;
    align-items: center;
    justify-content: center;
    width: 15px;
    height: 15px;
    background: #c0c0c0;
    border: 1px solid;
    border-color: #dfdfdf #000 #000 #dfdfdf;
    box-shadow: inset 1px 1px #fff, inset -1px -1px #808080;
}
.vscroll svg{
    width: 7px;
    height: 4px;
}
.track{
    flex: 1;
}
.vscroll .thumb{
    height: 50%;
}
.hscroll{
    display: flex;
    height: 15px;
}
.views{
    display: flex;
    align-items: center;
    gap: 5px;
    width: 86px;
    padding-left: 2px;
}
.views svg{
    width: 12px;
    height: 12px;
}
.arrow svg{
    width: 4px;
    height: 7px;
    filter: drop-shadow(1px 1px 0 #fff);
}
.corner{
    width: 15px;
}

/* drawing bar, status */
.draw-row{
    display: flex;
}
.draw-row .drop{
    width: 11px;
}
.font-color{
    align-items: flex-start;
    color: #000080;
    font-family: "Liberation Serif", serif;
    font-size: 17px;
    font-weight: 700;
    line-height: 17px;
    background: linear-gradient(#fff, #fff) 4px 15px / 16px 4px no-repeat;
}
.status{
    display: flex;
    gap: 5px;
    padding: 3px 4px 2px;
}
.cell{
    display: flex;
    align-items: center;
    justify-content: center;
    width: 245px;
    height: 17px;
    border: 1px solid;
    border-color: #808080 #fff #fff #808080;
}
.cell.spell{
    width: 31px;
}
.spell svg{
    width: 22px;
    height: 12px;
}

/* taskbar */
.taskbar{
    display: flex;
    align-items: center;
    height: 27px;
    padding: 0 2px;
    border-top: 1px solid #fff;
}
.start, .tasks button{
    display: flex;
    align-items: center;
    height: 22px;
    border: 1px solid;
    border-color: #fff #000 #000 #fff;
    box-shadow: inset -1px -1px #808080;
}
.start{
    gap: 2px;
    width: 58px;
    padding-left: 3px;
    font-weight: 700;
    font-size: 12px;
}
.quick{
    display: flex;
    gap: 7px;
    width: 167px;
    padding-left: 6px;
}
.orange{
    fill: #f90;
}
.yellow{
    fill: #ff0;
}
.cal{
    width: 16px;
    padding-top: 6px;
    font-family: "Liberation Serif", serif;
    font-size: 14px;
    font-weight: 700;
    line-height: 12px;
    background: repeating-conic-gradient(#666 0 25%, #c0c0c0 0 50%) 0 0 / 2px 2px content-box;
    background: repeating-linear-gradient(90deg, #666 0 1px, #c0c0c0 1px 2px) 0 0 / 16px 5px no-repeat;
}
.taskbar .grip{
    width: 4px;
    background: none;
}
.tasks{
    display: flex;
    flex: 1;
    gap: 3px;
    min-width: 0;
    padding: 0 4px 0 3px;
}
.tasks button{
    flex: 1;
    gap: 2px;
    min-width: 0;
    max-width: 90px;
    padding: 0 3px;
    overflow: hidden;
    white-space: nowrap;
}
.tasks .active{
    border-color: #000 #fff #fff #000;
    box-shadow: inset 1px 1px #808080;
    font-weight: 700;
}
.tray{
    display: flex;
    align-items: center;
    gap: 1px;
    width: 115px;
    height: 22px;
    padding: 0 6px 0 2px;
    border: 1px solid;
    border-color: #808080 #fff #fff #808080;
}
.tray time{
    margin-left: auto;
    font-size: 12px;
}
```
